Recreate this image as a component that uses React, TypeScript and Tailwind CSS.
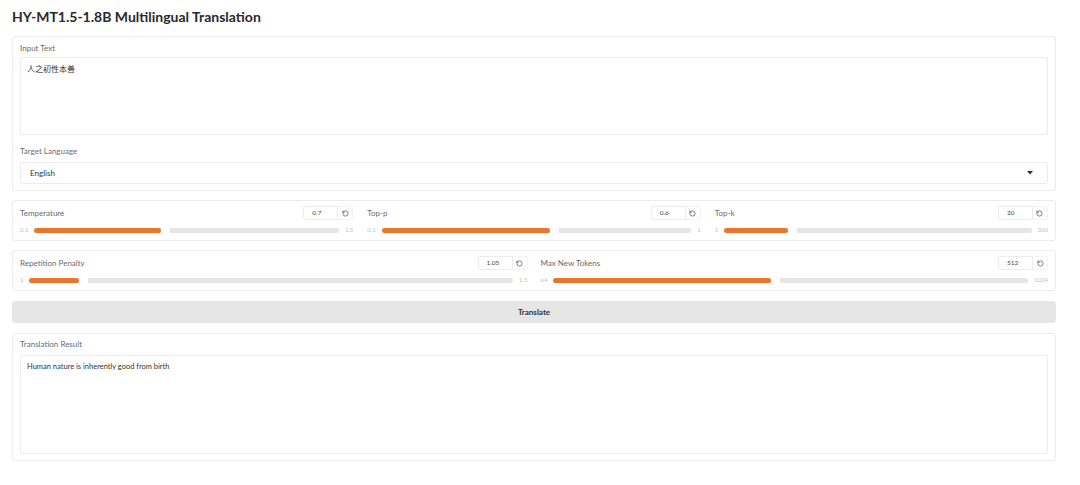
import { RotateCcw } from "lucide-react";

type SliderProps = {
  label: string;
  value: string;
  min: string;
  max: string;
  pct: number;
};

function SliderField({ label, value, min, max, pct }: SliderProps) {
  return (
    <div className="flex-1 min-w-0">
      <div className="flex items-center justify-between h-[14px]">
        <span className="text-[8px] text-[#6b6b6b] leading-none">{label}</span>
        <div className="flex items-center h-[14px]">
          <div className="w-[35px] h-[14px] border border-[#ececec] rounded-l-[2px] text-[6.5px] text-[#444] flex items-center pl-[8px] leading-none">
            {value}
          </div>
          <div className="w-[15px] h-[14px] border border-l-0 border-[#f3f3f3] rounded-r-[2px] flex items-center justify-center">
            <RotateCcw size={7} strokeWidth={2.5} className="text-[#555]" />
          </div>
        </div>
      </div>
      <div className="flex items-center gap-[6px] mt-[6px] h-[8px]">
        <span className="text-[6px] text-[#bdbdbd] leading-none">{min}</span>
        <div className="flex-1 flex items-center relative h-[6px]">
          <div className="h-[5px] bg-[#e5e5e5] rounded-full w-full" />
          <div
            className="absolute left-0 top-[0.5px] h-[5px] bg-[#e8772e] rounded-full"
            style={{ width: `calc(${pct}% - 4px)` }}
          />
          <div
            className="absolute top-[-1px] w-[9px] h-[8px] bg-white"
            style={{ left: `calc(${pct}% - 4px)` }}
          />
        </div>
        <span className="text-[6px] text-[#bdbdbd] leading-none">{max}</span>
      </div>
    </div>
  );
}

export default function App() {
  return (
    <div
      className="w-[1080px] h-[485px] bg-white pl-3 pr-6 pt-[7px]"
      style={{ fontFamily: 'Lato, "Noto Sans CJK SC", sans-serif' }}
    >
      <h1 className="text-[14px] font-bold text-[#2a2a2a] leading-[20px] mb-[9px]">
        HY-MT1.5-1.8B Multilingual Translation
      </h1>

      <div className="border border-[#ececec] rounded-[3px] px-[7px] pt-[5px] pb-[6px]">
        <div className="text-[8px] text-[#6b6b6b] leading-[12px] mb-[3px]">Input Text</div>
        <div className="h-[78px] border border-[#ececec] rounded-[2px] px-[6px] pt-[5px] text-[8px] text-[#333] leading-[12px]">
          人之初性本善
        </div>
        <div className="text-[8px] text-[#6b6b6b] leading-[12px] mt-[10px] mb-[5px]">Target Language</div>
        <div className="h-[22px] border border-[#ececec] rounded-[2px] pl-[9px] pr-[14px] flex items-center justify-between text-[8px] text-[#333]">
          <span>English</span>
          <svg width="6" height="4" viewBox="0 0 6 4">
            <path d="M0 0 L6 0 L3 3.5 Z" fill="#333" />
          </svg>
        </div>
      </div>

      <div className="border border-[#ececec] rounded-[3px] px-[7px] pt-[5px] pb-[6px] mt-[9px] flex gap-[14px]">
        <SliderField label="Temperature" value="0.7" min="0.1" max="1.5" pct={42.9} />
        <SliderField label="Top-p" value="0.6" min="0.1" max="1" pct={55.6} />
        <SliderField label="Top-k" value="20" min="1" max="300" pct={22} />
      </div>

      <div className="border border-[#ececec] rounded-[3px] px-[7px] pt-[5px] pb-[6px] mt-[9px] flex gap-[13px]">
        <SliderField label="Repetition Penalty" value="1.05" min="1" max="1.5" pct={11} />
        <SliderField label="Max New Tokens" value="512" min="64" max="1024" pct={46.7} />
      </div>

      <button className="w-full h-[22px] mt-[10px] bg-[#e6e6e6] rounded-[3px] text-[8px] font-bold text-[#333] flex items-center justify-center">
        Translate
      </button>

      <div className="border border-[#ececec] rounded-[3px] px-[7px] pt-[4px] pb-[6px] mt-[10px]">
        <div className="text-[8px] text-[#6b6b6b] leading-[12px] mb-[5px]">Translation Result</div>
        <div className="h-[99px] border border-[#ececec] rounded-[2px] px-[6px] pt-[5px] text-[7.5px] text-[#333] leading-[12px]">
          Human nature is inherently good from birth
        </div>
      </div>
    </div>
  );
}
